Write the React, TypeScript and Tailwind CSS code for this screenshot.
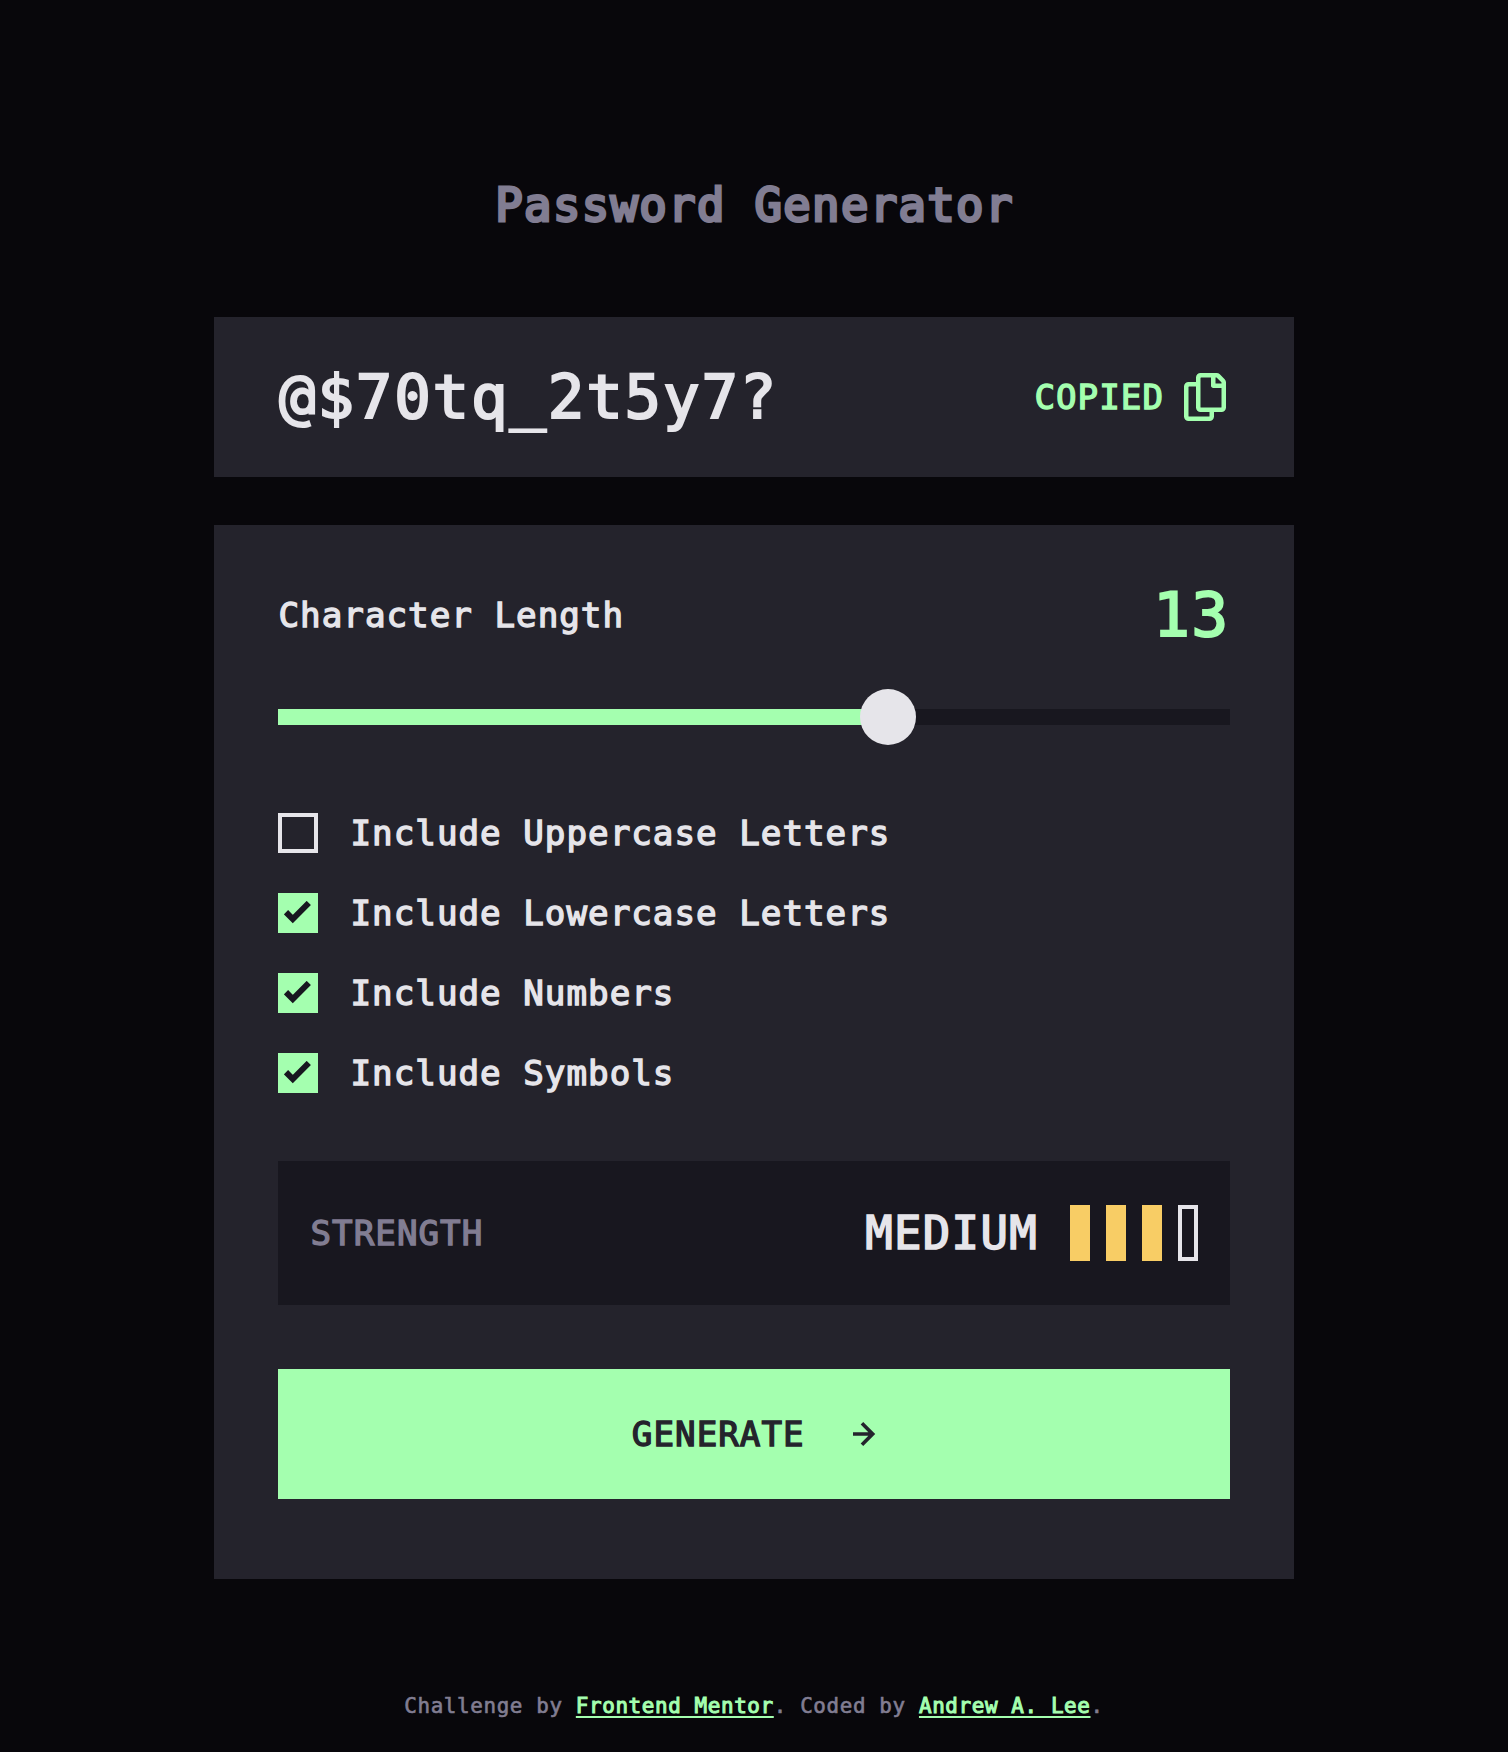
import { useState } from "react";

const OPTIONS = [
  { label: "Include Uppercase Letters", on: false },
  { label: "Include Lowercase Letters", on: true },
  { label: "Include Numbers", on: true },
  { label: "Include Symbols", on: true },
];

function CopyIcon() {
  return (
    <svg width="42" height="48" viewBox="0 0 21 24" fill="#A4FFAF">
      <path d="M20.341 3.091 17.909.659A2.25 2.25 0 0 0 16.319 0H8.25A2.25 2.25 0 0 0 6 2.25V4.5H2.25A2.25 2.25 0 0 0 0 6.75v15A2.25 2.25 0 0 0 2.25 24h10.5A2.25 2.25 0 0 0 15 21.75V19.5h3.75A2.25 2.25 0 0 0 21 17.25V4.682a2.25 2.25 0 0 0-.659-1.591ZM12.469 21.75H2.53a.281.281 0 0 1-.281-.281V7.03a.281.281 0 0 1 .281-.281H6v10.5a2.25 2.25 0 0 0 2.25 2.25h4.5v1.969a.282.282 0 0 1-.281.281Zm6-4.5H8.53a.281.281 0 0 1-.281-.281V2.53a.281.281 0 0 1 .281-.281H13.5v4.125c0 .621.504 1.125 1.125 1.125h4.125v9.469a.282.282 0 0 1-.281.281Zm.281-12h-3v-3h.451c.075 0 .147.03.2.082L18.667 4.6a.283.283 0 0 1 .082.199v.451Z" />
    </svg>
  );
}

function CheckIcon() {
  return (
    <svg width="28" height="24" viewBox="0 0 14 12" fill="none">
      <path stroke="#18171F" strokeWidth="3" d="M1 5.607 4.393 9l8-8" />
    </svg>
  );
}

function ArrowIcon() {
  return (
    <svg width="24" height="24" viewBox="0 0 12 12" fill="#24232C">
      <path d="m5.106 12 6-6-6-6-1.265 1.265 3.841 3.84H.001v1.79h7.681l-3.841 3.84z" />
    </svg>
  );
}

const body =
  "pl-[0.5px] text-[34.2px] leading-[48px] tracking-[0.0296em] [-webkit-text-stroke:0.04em_currentColor]";
const large =
  "text-[60.8px] leading-[84px] tracking-[0.0296em] [-webkit-text-stroke:0.036em_currentColor]";
const link =
  "text-[#A4FFAF] underline decoration-[1.5px] underline-offset-[3px] [text-decoration-skip-ink:none] [-webkit-text-stroke:0.05em_currentColor]";

export default function App() {
  const [options, setOptions] = useState(OPTIONS);
  const toggle = (index: number) =>
    setOptions(options.map((o, i) => (i === index ? { ...o, on: !o.on } : o)));

  return (
    <div className="flex h-[1752px] flex-col items-center overflow-hidden bg-[#08070B] font-['DejaVu_Sans_Mono',monospace] whitespace-nowrap text-[#E6E5EA]">
      <h1 className="mt-[173px] h-16 pt-px pl-px text-[45.6px] leading-[64px] tracking-[0.0296em] text-[#817D92] [-webkit-text-stroke:0.065em_currentColor]">
        Password Generator
      </h1>

      <main className="mt-20 w-[1080px]">
        <section className="flex h-40 items-center justify-between bg-[#24232C] pr-[68px] pl-16">
          <p className={`${large} pl-px`}>@$70tq_2t5y7?</p>
          <button className="flex items-center gap-5 text-[#A4FFAF]">
            <span className={body}>COPIED</span>
            <CopyIcon />
          </button>
        </section>

        <section className="mt-12 h-[1054px] bg-[#24232C] px-16 pt-12">
          <div className="flex h-[84px] items-center justify-between">
            <span className={body}>Character Length</span>
            <span className={`${large} text-[#A4FFAF]`}>13</span>
          </div>

          <div className="relative mt-8 flex h-14 items-center">
            <div className="h-4 w-full bg-[#18171F]">
              <div className="h-4 w-[610px] bg-[#A4FFAF]" />
            </div>
            <div className="absolute left-[582px] size-14 rounded-full bg-[#E6E5EA]" />
          </div>

          <ul className="mt-[68px] flex flex-col gap-10">
            {options.map((option, i) => (
              <li key={option.label} className="flex h-10 items-center gap-8">
                <button
                  role="checkbox"
                  aria-checked={option.on}
                  aria-label={option.label}
                  onClick={() => toggle(i)}
                  className={
                    option.on
                      ? "flex size-10 items-center justify-center bg-[#A4FFAF]"
                      : "size-10 border-4 border-[#E6E5EA]"
                  }
                >
                  {option.on && <CheckIcon />}
                </button>
                <span className={body}>{option.label}</span>
              </li>
            ))}
          </ul>

          <div className="mt-[68px] flex h-36 items-center justify-between bg-[#18171F] px-8">
            <span className={`${body} text-[#817D92]`}>STRENGTH</span>
            <div className="flex items-center gap-8">
              <span className="pt-[2px] text-[45.6px] leading-[64px] tracking-[0.0296em] [-webkit-text-stroke:0.036em_currentColor]">
                MEDIUM
              </span>
              <div className="flex gap-4">
                <div className="h-14 w-5 bg-[#F8CD65]" />
                <div className="h-14 w-5 bg-[#F8CD65]" />
                <div className="h-14 w-5 bg-[#F8CD65]" />
                <div className="h-14 w-5 border-4 border-[#E6E5EA]" />
              </div>
            </div>
          </div>

          <button className="mt-16 flex h-[130px] w-full items-center justify-center gap-12 bg-[#A4FFAF] text-[#24232C]">
            <span className={body}>GENERATE</span>
            <ArrowIcon />
          </button>
        </section>
      </main>

      <footer className="mt-[111px] text-[20.9px] leading-8 tracking-[0.0296em] text-[#817D92] [-webkit-text-stroke:0.03em_currentColor]">
        Challenge by <a className={link}>Frontend Mentor</a>. Coded by{" "}
        <a className={link}>Andrew A. Lee</a>.
      </footer>
    </div>
  );
}
